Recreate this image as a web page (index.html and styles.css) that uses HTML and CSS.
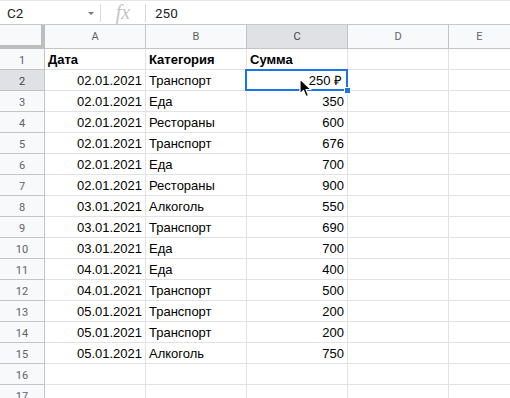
FILE: index.html
```html
<!DOCTYPE html>
<html lang="ru">
<head>
<meta charset="utf-8">
<link rel="stylesheet" href="styles.css">
</head>
<body>
<div class="formula-bar">
  <div class="namebox"><span class="ref">C2</span><span class="caret"></span></div>
  <div class="sep"></div>
  <div class="fx">fx</div>
  <div class="sep"></div>
  <div class="formula">250</div>
</div>
<div class="sheet">
  <div class="corner"></div>
  <div class="colhead">A</div>
  <div class="colhead">B</div>
  <div class="colhead sel">C</div>
  <div class="colhead">D</div>
  <div class="colhead last">E</div>

  <div class="rowhead">1</div><div class="cell bold">Дата</div><div class="cell bold">Категория</div><div class="cell bold">Сумма</div><div class="cell"></div><div class="cell last"></div>
  <div class="rowhead sel">2</div><div class="cell num">02.01.2021</div><div class="cell">Транспорт</div><div class="cell num active">250 ₽<span class="handle"></span><svg class="pointer" width="13" height="20" viewBox="0 0 13 20"><path d="M1 1 L1 16 L4.5 12.5 L7 18.5 L9.5 17.5 L7 11.5 L12 11.5 Z" fill="#000" stroke="#fff" stroke-width="1.2" stroke-linejoin="round"/></svg></div><div class="cell"></div><div class="cell last"></div>
  <div class="rowhead">3</div><div class="cell num">02.01.2021</div><div class="cell">Еда</div><div class="cell num">350</div><div class="cell"></div><div class="cell last"></div>
  <div class="rowhead">4</div><div class="cell num">02.01.2021</div><div class="cell">Рестораны</div><div class="cell num">600</div><div class="cell"></div><div class="cell last"></div>
  <div class="rowhead">5</div><div class="cell num">02.01.2021</div><div class="cell">Транспорт</div><div class="cell num">676</div><div class="cell"></div><div class="cell last"></div>
  <div class="rowhead">6</div><div class="cell num">02.01.2021</div><div class="cell">Еда</div><div class="cell num">700</div><div class="cell"></div><div class="cell last"></div>
  <div class="rowhead">7</div><div class="cell num">02.01.2021</div><div class="cell">Рестораны</div><div class="cell num">900</div><div class="cell"></div><div class="cell last"></div>
  <div class="rowhead">8</div><div class="cell num">03.01.2021</div><div class="cell">Алкоголь</div><div class="cell num">550</div><div class="cell"></div><div class="cell last"></div>
  <div class="rowhead">9</div><div class="cell num">03.01.2021</div><div class="cell">Транспорт</div><div class="cell num">690</div><div class="cell"></div><div class="cell last"></div>
  <div class="rowhead">10</div><div class="cell num">03.01.2021</div><div class="cell">Еда</div><div class="cell num">700</div><div class="cell"></div><div class="cell last"></div>
  <div class="rowhead">11</div><div class="cell num">04.01.2021</div><div class="cell">Еда</div><div class="cell num">400</div><div class="cell"></div><div class="cell last"></div>
  <div class="rowhead">12</div><div class="cell num">04.01.2021</div><div class="cell">Транспорт</div><div class="cell num">500</div><div class="cell"></div><div class="cell last"></div>
  <div class="rowhead">13</div><div class="cell num">05.01.2021</div><div class="cell">Транспорт</div><div class="cell num">200</div><div class="cell"></div><div class="cell last"></div>
  <div class="rowhead">14</div><div class="cell num">05.01.2021</div><div class="cell">Транспорт</div><div class="cell num">200</div><div class="cell"></div><div class="cell last"></div>
  <div class="rowhead">15</div><div class="cell num">05.01.2021</div><div class="cell">Алкоголь</div><div class="cell num">750</div><div class="cell"></div><div class="cell last"></div>
  <div class="rowhead">16</div><div class="cell"></div><div class="cell"></div><div class="cell"></div><div class="cell"></div><div class="cell last"></div>
  <div class="rowhead">17</div><div class="cell"></div><div class="cell"></div><div class="cell"></div><div class="cell"></div><div class="cell last"></div>
</div>
</body>
</html>
```
FILE: styles.css
```css
* { box-sizing: border-box; }
html, body { margin: 0; padding: 0; background: #fff; }
body {
  width: 510px;
  height: 398px;
  overflow: hidden;
  font-family: "Liberation Sans", Arial, sans-serif;
  color: #000;
}
.formula-bar {
  height: 25px;
  display: flex;
  align-items: center;
  border-top: 1px solid #e6e6e6;
  border-bottom: 1px solid #c8c8c8;
}
.namebox {
  width: 100px;
  display: flex;
  align-items: center;
  justify-content: space-between;
  padding: 0 6px 0 7px;
  font-family: Roboto, "Liberation Sans", sans-serif;
  font-size: 13.5px;
  color: #222;
}
.caret {
  width: 0; height: 0;
  border-left: 3px solid transparent;
  border-right: 3px solid transparent;
  border-top: 3px solid #777;
  margin-top: 1px;
}
.sep {
  width: 1px;
  height: 18px;
  background: #dadada;
}
.fx {
  width: 44px;
  text-align: center;
  font-family: "Liberation Serif", serif;
  font-style: italic;
  font-size: 20px;
  color: #c4c4c4;
  line-height: 20px;
  margin-top: -2px;
}
.formula {
  padding-left: 9px;
  font-family: Roboto, "Liberation Sans", sans-serif;
  font-size: 13.5px;
  color: #222;
}
.sheet {
  display: grid;
  grid-template-columns: 45px 101px 101px 101px 101px 1fr;
  grid-template-rows: 24px repeat(17, 21px);
}
.corner {
  background: #f8f9fa;
  border-right: 4px solid #bdbdbd;
  border-bottom: 4px solid #bdbdbd;
}
.colhead {
  background: #f8f9fa;
  border-right: 1px solid #c4c4c4;
  border-bottom: 1px solid #c4c4c4;
  font-family: Roboto, "Liberation Sans", sans-serif;
  font-size: 11px;
  color: #5f6368;
  display: flex;
  align-items: center;
  justify-content: center;
}
.colhead.sel, .rowhead.sel { background: #dfe1e5; color: #444; }
.colhead.last { border-right: none; }
.rowhead {
  background: #f8f9fa;
  border-right: 1px solid #c4c4c4;
  border-bottom: 1px solid #c4c4c4;
  font-family: Roboto, "Liberation Sans", sans-serif;
  font-size: 11px;
  color: #5f6368;
  display: flex;
  align-items: center;
  justify-content: center;
  padding-top: 2px;
}
.cell {
  border-right: 1px solid #e2e2e2;
  border-bottom: 1px solid #e2e2e2;
  font-size: 13px;
  line-height: 20px;
  padding: 1px 3px 0;
  white-space: nowrap;
  overflow: visible;
}
.cell.last { border-right: none; }
.cell.bold { font-weight: bold; }
.cell.num { text-align: right; }
.cell.active { position: relative; padding-right: 5px; }
.cell.active::after {
  content: "";
  position: absolute;
  left: -2px; top: -1px; right: -1px; bottom: -1px;
  border: 2px solid #1a73e8;
  pointer-events: none;
}
.handle {
  position: absolute;
  right: -4px;
  bottom: -4px;
  width: 7px;
  height: 7px;
  background: #1a73e8;
  border: 1px solid #fff;
  z-index: 2;
}
.pointer {
  position: absolute;
  left: 52px;
  top: 8px;
  z-index: 3;
}
```
